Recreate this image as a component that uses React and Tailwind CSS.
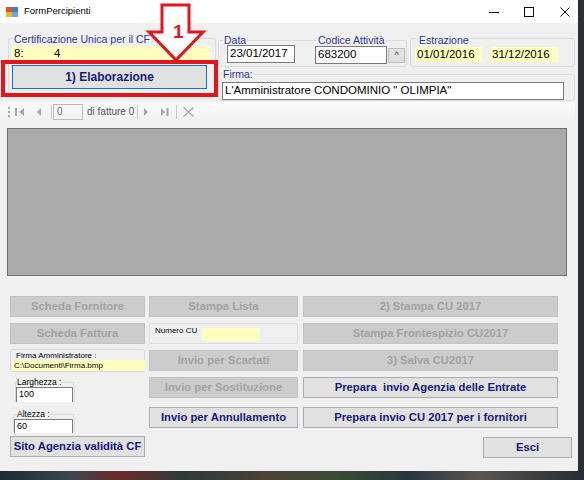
import React from 'react';

const lbl = 'w-fit whitespace-nowrap bg-[#f0f0f0] px-px text-[10.5px] leading-[11px] text-[#2f3596]';
const inp = 'flex items-center border border-[#7a7a7a] bg-white pl-[2px] text-[11.5px] leading-none text-black';
const yel = 'flex items-center bg-[#ffffc0] pl-[2px] text-[11.5px] leading-none text-black';

function Btn({ children, on, className = '' }) {
    const look = on
        ? 'border-[#adadad] bg-[#e1e1e1] text-[#18187a]'
        : 'border-[#c2c2c2] bg-[#cccccc] text-[#a2a2a2]';
    return (
        <div className={`flex h-[21px] items-center justify-center whitespace-pre border text-[11.3px] font-bold ${look} ${className}`}>
            {children}
        </div>
    );
}

function Sep({ className = '' }) {
    return <div className={`h-[14px] w-px bg-[#c9c9c9] ${className}`} />;
}

export default function App() {
    return (
        <div className="h-[480px] w-[584px] overflow-hidden bg-[#2b2f33] font-['Liberation_Sans',Arial,sans-serif]">
            <div className="relative flex h-[471px] w-[578px] flex-col bg-[#f0f0f0]">

                {/* title bar */}
                <div className="flex h-[23px] shrink-0 items-center bg-white">
                    <svg width="12" height="10" viewBox="0 0 12 10" className="ml-[6px]">
                        <rect x="0" y="0" width="6" height="5" fill="#e2502c" />
                        <rect x="6" y="0" width="6" height="5" fill="#3a7fd6" />
                        <rect x="0" y="5" width="6" height="5" fill="#f2b52a" />
                        <rect x="6" y="5" width="6" height="5" fill="#6aa8ea" />
                    </svg>
                    <span className="ml-[6px] text-[9.5px] text-black">FormPercipienti</span>
                    <svg width="10" height="10" viewBox="0 0 10 10" className="ml-auto">
                        <line x1="0" y1="5.5" x2="10" y2="5.5" stroke="#111" strokeWidth="1" />
                    </svg>
                    <svg width="10" height="10" viewBox="0 0 10 10" className="ml-[25px]">
                        <rect x="0.5" y="0.5" width="9" height="9" fill="none" stroke="#111" strokeWidth="1" />
                    </svg>
                    <svg width="10" height="10" viewBox="0 0 10 10" className="ml-[26px] mr-[8px]">
                        <path d="M0.5 0.5 L9.5 9.5 M9.5 0.5 L0.5 9.5" stroke="#111" strokeWidth="1" />
                    </svg>
                </div>

                {/* top area */}
                <div className="flex h-[79px] shrink-0 items-start">
                    <div className="ml-[8px] mt-[15px] h-[58px] w-[208px] rounded-[3px] border border-[#dcdcdc]">
                        <div className={`-mt-[5px] ml-[4px] ${lbl}`}>Certificazione Unica per il CF</div>
                        <div className={`ml-[3px] mt-px h-[15px] w-[198px] ${yel}`}>
                            <span className="w-[40px]">8:</span>
                            <span>4</span>
                        </div>
                        <div className="ml-[3px] mt-[4px] flex h-[24px] w-[195px] items-center justify-center border border-[#0078d7] bg-[#e1e1e1] text-[12px] font-bold text-[#18187a]">
                            1) Elaborazione
                        </div>
                    </div>

                    <div className="ml-[2px] flex w-[357px] flex-col">
                        <div className="mt-[17px] flex items-start">
                            <div className="flex h-[27px] w-[189px] rounded-[3px] border border-[#dcdcdc]">
                                <div className="ml-[4px] w-[88px]">
                                    <div className={`-mt-[6px] ${lbl}`}>Data</div>
                                    <div className={`-mt-px ml-[4px] h-[18px] w-[68px] ${inp}`}>23/01/2017</div>
                                </div>
                                <div className="ml-[4px]">
                                    <div className={`-mt-[6px] ml-[2px] ${lbl}`}>Codice Attività</div>
                                    <div className="flex items-start">
                                        <div className={`h-[18px] w-[72px] ${inp}`}>683200</div>
                                        <div className="ml-px mt-[2px] flex h-[15px] w-[17px] items-center justify-center border border-[#bdbdbd] bg-[#e1e1e1] text-[9px] text-[#333]">
                                            ^
                                        </div>
                                    </div>
                                </div>
                            </div>
                            <div className="-mt-[2px] ml-[3px] h-[29px] w-[165px] rounded-[3px] border border-[#dcdcdc]">
                                <div className={`-mt-[4px] ml-[7px] ${lbl}`}>Estrazione</div>
                                <div className="mt-px flex">
                                    <div className={`ml-[4px] h-[15px] w-[67px] ${yel}`}>01/01/2016</div>
                                    <div className={`ml-[8px] h-[15px] w-[68px] ${yel}`}>31/12/2016</div>
                                </div>
                            </div>
                        </div>
                        <div className="mt-[7px] h-[27px] w-[357px] rounded-[3px] border border-[#dcdcdc]">
                            <div className={`-mt-[6px] ml-[3px] ${lbl}`}>Firma:</div>
                            <div className={`ml-[3px] mt-[2px] h-[18px] w-[342px] ${inp}`}>
                                L'Amministratore CONDOMINIO " OLIMPIA"
                            </div>
                        </div>
                    </div>
                </div>

                {/* navigator toolbar */}
                <div className="flex h-[19px] w-[575px] shrink-0 items-center rounded-r-[3px] bg-[linear-gradient(#fbfbfb,#f1f1f1)]">
                    <div className="ml-[8px] h-[10px] w-[2px] border-l-2 border-dotted border-[#a8a8a8]" />
                    <svg width="10" height="8" viewBox="0 0 10 8" className="ml-[5px]">
                        <rect x="0" y="0" width="2" height="8" fill="#a6a6a6" />
                        <polygon points="9,0 9,8 4,4" fill="#a6a6a6" />
                    </svg>
                    <svg width="6" height="8" viewBox="0 0 6 8" className="ml-[11px]">
                        <polygon points="5,0 5,8 1,4" fill="#a6a6a6" />
                    </svg>
                    <Sep className="ml-[9px]" />
                    <div className="ml-px flex h-[16px] w-[30px] items-center border border-[#bcbcbc] pl-[3px] text-[10px] text-[#6a6a6a]">0</div>
                    <div className="ml-[4px] w-[49px] whitespace-nowrap text-[10px] text-[#555]">di fatture 0</div>
                    <Sep className="ml-px" />
                    <svg width="6" height="8" viewBox="0 0 6 8" className="ml-[5px]">
                        <polygon points="1,0 1,8 5,4" fill="#a6a6a6" />
                    </svg>
                    <svg width="8" height="8" viewBox="0 0 8 8" className="ml-[12px]">
                        <polygon points="0,0 0,8 4,4" fill="#a6a6a6" />
                        <rect x="5.5" y="0" width="2" height="8" fill="#a6a6a6" />
                    </svg>
                    <Sep className="ml-[7px]" />
                    <svg width="11" height="10" viewBox="0 0 11 10" className="ml-[6px]">
                        <path d="M0.5 0.5 L10.5 9.5 M10.5 0.5 L0.5 9.5" stroke="#a6a6a6" strokeWidth="1.2" />
                    </svg>
                </div>

                {/* data grid */}
                <div className="ml-[7px] mt-[7px] h-[148px] w-[560px] shrink-0 border border-[#6e6e6e] bg-[#ababab]" />

                {/* buttons */}
                <div className="mt-[20px] flex items-start pl-[10px]">
                    <div className="flex w-[135px] flex-col">
                        <Btn>Scheda Fornitore</Btn>
                        <Btn className="mt-[6px]">Scheda Fattura</Btn>
                        <div className="mt-[5px] h-[23px] rounded-[2px] border border-[#dadada]">
                            <div className="ml-[5px] mt-px whitespace-nowrap text-[8px] leading-[9px] text-black">Firma Amministratore :</div>
                            <div className="ml-px flex h-[11px] w-[133px] items-center bg-[#ffffc0] pl-[2px] text-[8px] leading-none text-black">
                                C:\Documenti\Firma.bmp
                            </div>
                        </div>
                        <div className="ml-[5px] mt-[10px] h-[20px] w-[60px] rounded-[2px] border border-b-0 border-[#dadada]">
                            <div className="-mt-[5px] ml-px w-fit whitespace-nowrap bg-[#f0f0f0] text-[8.5px] leading-[9px] text-black">Larghezza :</div>
                            <div className="flex h-[15px] w-[57px] items-start border border-b-0 border-[#7a7a7a] bg-white pl-[2px] pt-[2px] text-[9px] leading-none text-black">100</div>
                        </div>
                        <div className="ml-[3px] mt-[12px] h-[19px] w-[62px] rounded-[2px] border border-b-0 border-[#dadada]">
                            <div className="-mt-[5px] ml-[3px] w-fit whitespace-nowrap bg-[#f0f0f0] text-[8.5px] leading-[9px] text-black">Altezza :</div>
                            <div className="flex h-[14px] w-[59px] items-start border border-b-0 border-[#7a7a7a] bg-white pl-[2px] pt-[2px] text-[9px] leading-none text-black">60</div>
                        </div>
                        <Btn on className="mt-[3px]">Sito Agenzia validità CF</Btn>
                    </div>

                    <div className="ml-[4px] flex w-[149px] flex-col">
                        <Btn>Stampa Lista</Btn>
                        <div className="mt-[6px] flex h-[21px] items-start rounded-[2px] border border-[#dadada]">
                            <div className="ml-[5px] mt-[2px] w-[44px] whitespace-nowrap text-[8px] leading-[9px] text-black">Numero CU</div>
                            <div className="ml-[3px] mt-[4px] h-[13px] w-[58px] bg-[#ffffc0]" />
                        </div>
                        <Btn className="mt-[6px]">Invio per Scartati</Btn>
                        <Btn className="mt-[6px]">Invio per Sostituzione</Btn>
                        <Btn on className="mt-[9px]">Invio per Annullamento</Btn>
                    </div>

                    <div className="ml-[5px] flex w-[269px] flex-col">
                        <Btn className="w-[255px]">2) Stampa CU 2017</Btn>
                        <Btn className="mt-[6px] w-[255px]">Stampa Frontespizio CU2017</Btn>
                        <Btn className="mt-[6px] w-[255px]">3) Salva CU2017</Btn>
                        <Btn on className="mt-[6px] w-[255px]">Prepara  invio Agenzia delle Entrate</Btn>
                        <Btn on className="mt-[9px] w-[255px]">Prepara invio CU 2017 per i fornitori</Btn>
                        <Btn on className="mt-[9px] w-[89px] self-end">Esci</Btn>
                    </div>
                </div>

                {/* annotation: red frame and arrow */}
                <div className="absolute left-[1px] top-[60px] h-[37px] w-[217px] border-4 border-[#e3161d]" />
                <svg width="230" height="70" viewBox="0 0 230 70" className="absolute left-0 top-0">
                    <polygon
                        points="162,5 189,5 189,32 203,32 176,60 149,32 162,32"
                        fill="#ffffff"
                        stroke="#e3161d"
                        strokeWidth="3"
                    />
                </svg>
                <span className="absolute left-[173px] top-[22px] text-[19px] font-bold leading-[20px] text-[#e3161d]">1</span>
            </div>
            <div className="h-[9px] w-[584px] bg-[linear-gradient(90deg,#1e2933_0%,#3b4650_12%,#6a2b2b_20%,#2e3a3a_32%,#4a4038_45%,#3a4a34_58%,#2b3540_70%,#5a5550_82%,#262c33_100%)]" />
        </div>
    );
}
